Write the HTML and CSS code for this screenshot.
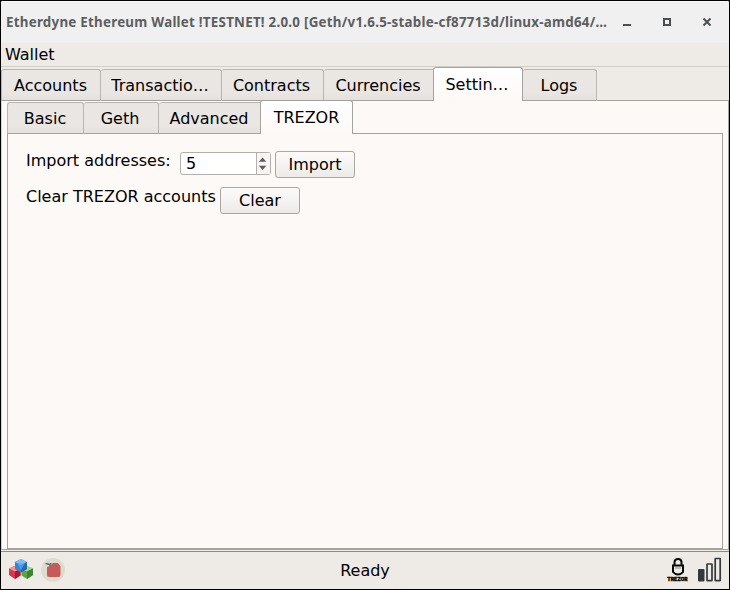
FILE: index.html
```html
<!DOCTYPE html>
<html lang="en">
<head>
<meta charset="utf-8">
<title>Etherdyne Ethereum Wallet</title>
<link rel="stylesheet" href="styles.css">
</head>
<body>
<div class="window">
  <header class="titlebar">
    <span class="title">Etherdyne Ethereum Wallet !TESTNET! 2.0.0 [Geth/v1.6.5-stable-cf87713d/linux-amd64/…</span>
    <svg class="controls" width="100" height="20" viewBox="0 0 100 20">
      <path d="M3 12h8v2H3z" fill="#4c5052"/>
      <path d="M44 7h6v6h-6z" fill="none" stroke="#4c5052" stroke-width="2"/>
      <path d="M83.500 6.500l7 7M90.500 6.500l-7 7" stroke="#4c5052" stroke-width="2"/>
    </svg>
  </header>
  <nav class="menubar"><span>Wallet</span></nav>
  <div class="tabs main-tabs">
    <div class="tab accounts">Accounts</div>
    <div class="tab transactions">Transactio…</div>
    <div class="tab contracts">Contracts</div>
    <div class="tab currencies">Currencies</div>
    <div class="tab active settings">Settin…</div>
    <div class="tab logs">Logs</div>
  </div>
  <main class="pane">
    <div class="tabs sub-tabs">
      <div class="tab basic">Basic</div>
      <div class="tab geth">Geth</div>
      <div class="tab advanced">Advanced</div>
      <div class="tab active trezor">TREZOR</div>
    </div>
    <section class="subpane">
      <div class="row">
        <span class="label import-label">Import addresses:</span>
        <div class="spin">
          <span class="value">5</span>
          <svg class="arrows" width="14" height="21" viewBox="0 0 14 21">
            <path d="M2 8.500L6 4l4 4.500zM2 13h8l-4 4.500z" fill="#5c5c5c"/>
          </svg>
        </div>
        <button class="button import">Import</button>
      </div>
      <div class="row">
        <span class="label clear-label">Clear TREZOR accounts</span>
        <button class="button">Clear</button>
      </div>
    </section>
  </main>
  <footer class="statusbar">
    <div class="status-left">
      <svg width="26" height="22" viewBox="0 0 26 22">
        <path d="M1 9.500l5.500-2.500 6 3v6.500L7 20l-6-4z" fill="#d03a4c"/>
        <path d="M1 9.500l5.500-2.500 6 3L7 12.500z" fill="#f0939c"/>
        <path d="M7 12.500V20l5.500-3.500V10z" fill="#b01830"/>
        <path d="M13.500 10l5.500-3 6 2.500V16l-6 4-5.500-3.500z" fill="#5aa544"/>
        <path d="M13.500 10l5.500-3 6 2.500-6 3z" fill="#a6d48c"/>
        <path d="M19 12.500V20l6-4V9.500z" fill="#3d8530"/>
        <path d="M7 3l6-3 6 3v7l-6 3.500L7 10z" fill="#3685d3"/>
        <path d="M7 3l6-3 6 3-6 3z" fill="#82bdf0"/>
        <path d="M13 6v7.500l6-3.500V3z" fill="#2768b6"/>
        <path d="M9 4h8l-4 7z" fill="#61a7ea" opacity=".7"/>
      </svg>
      <svg width="24" height="24" viewBox="0 0 24 24">
        <circle cx="12" cy="12" r="12" fill="#ddddce"/>
        <path d="M6 9l3-1 3-3h5l2.500 3.500V17q0 2-2 2H8q-2 0-2-2z" fill="#c95a5a"/>
        <path d="M4.500 5.500l4 1 1 2M8.500 6.500l2-1" fill="none" stroke="#5b7078" stroke-width="1.500"/>
      </svg>
    </div>
    <span class="status-text">Ready</span>
    <div class="status-right">
      <div class="device">
        <svg width="14" height="18" viewBox="0 0 14 18">
          <path d="M3.500 7V4.500q0-3.500 3.500-3.500t3.500 3.500V7M2 7.500h10v6.500q-2 2.500-5 2.500t-5-2.500z" fill="none" stroke="#080808" stroke-width="2"/>
          <path d="M4 10h6" stroke="#888" stroke-width="1"/>
        </svg>
        <span class="device-name">TREZOR</span>
      </div>
      <svg width="24" height="26" viewBox="0 0 24 26">
        <rect x="0" y="12" width="6.500" height="12.500" rx="1" fill="#34383a"/>
        <rect x="9" y="7" width="5" height="16.700" rx=".5" fill="none" stroke="#34383a" stroke-width="1.700"/>
        <rect x="17.200" y="1.500" width="5" height="22.200" rx=".5" fill="none" stroke="#34383a" stroke-width="1.700"/>
      </svg>
    </div>
  </footer>
</div>
</body>
</html>
```

FILE: styles.css
```css
* { box-sizing: border-box; }
body {
  margin: 0;
  background: #000;
  font: 16px/20px "DejaVu Sans", sans-serif;
  color: #000;
}
.window {
  width: 730px;
  height: 590px;
  border: 1px solid #000;
  border-radius: 3px 3px 0 0;
  background: #eeebe7;
  display: flex;
  flex-direction: column;
  overflow: hidden;
}
.titlebar {
  height: 42px;
  flex: none;
  background: #f0f0f0;
  border-top: 1px solid #faf9fb;
  display: flex;
  align-items: center;
  padding: 0 0 1px 5px;
}
.title {
  width: 614px;
  font: bold 13.33px/20px "Noto Sans", sans-serif;
  letter-spacing: .26px;
  color: #5c5e60;
  white-space: nowrap;
}
.controls { flex: none; }
.menubar {
  height: 24px;
  flex: none;
  border-bottom: 1px solid #d2cfca;
  padding: 2px 0 0 4px;
}
.tabs { display: flex; align-items: flex-end; }
.main-tabs { height: 34px; flex: none; }
.tab {
  height: 32px;
  flex: none;
  border: 1px solid #b8b5b2;
  border-left-width: 0;
  border-bottom-color: #a5a3a0;
  border-radius: 3px 3px 0 0;
  background: linear-gradient(#e9e6e3 75%, #e3e0dd);
  line-height: 31px;
  text-align: center;
  white-space: nowrap;
}
.tab:first-child { border-left-width: 1px; }
.tab.active {
  height: 34px;
  border: 1px solid #a5a3a0;
  border-bottom: 0;
  background: linear-gradient(#fff, #fdf9f6);
  line-height: 33px;
}
.accounts { width: 100px; padding-right: 1px; }
.transactions { width: 121px; padding-right: 2px; }
.contracts { width: 102px; padding-right: 2px; }
.currencies { width: 109px; border-right: 0; border-top-right-radius: 0; padding-right: 1px; }
.tab.settings { width: 90px; padding-right: 2px; }
.logs { width: 74px; padding-right: 1px; }
.pane {
  height: 449px;
  flex: none;
  border-right: 1px solid #a5a3a0;
  border-left: 1px solid #d6d1ce;
  border-bottom: 1px solid #a5a3a0;
  background: #fdf9f6;
  padding: 0 5px;
}
.tabs::after {
  content: "";
  flex: 1;
  border-bottom: 1px solid #a5a3a0;
}
.sub-tabs { height: 33px; }
.basic { width: 77px; padding-right: 1px; }
.geth { width: 75px; padding-right: 2px; }
.advanced { width: 101px; border-right: 0; border-top-right-radius: 0; padding-right: 1px; }
.trezor { width: 93px; }
.subpane {
  height: 415px;
  border: 1px solid #a5a3a0;
  border-top: 0;
  padding: 17px 0 0 18px;
}
.row { display: flex; height: 36px; }
.label { line-height: 20px; white-space: nowrap; }
.import-label { width: 154px; }
.clear-label { width: 194px; }
.spin {
  width: 91px;
  height: 23px;
  margin-top: 1px;
  border: 1px solid #b2afac;
  border-radius: 3px;
  background: #fff;
  display: flex;
}
.value { flex: 1; padding-left: 5px; line-height: 21px; }
.arrows { border-left: 1px solid #b2afac; background: #f7f5f3; }
.button {
  width: 80px;
  height: 27px;
  padding: 0;
  border: 1px solid #aaa8a5;
  border-radius: 3px;
  background: linear-gradient(#fcfbfa, #edebe8);
  color: #000;
  font: 16px/23px "DejaVu Sans", sans-serif;
}
.import { margin-left: 4px; }
.statusbar {
  flex: 1;
  margin-top: 1px;
  border-top: 1px solid #8e8b87;
  display: grid;
  grid-template-columns: 1fr auto 1fr;
  align-items: center;
  padding: 0 7px 1px;
}
.status-left { display: flex; align-items: center; gap: 7px; }
.status-text { line-height: 20px; padding-top: 2px; }
.status-right { display: flex; justify-content: flex-end; align-items: center; gap: 10px; }
.device { width: 21px; display: flex; flex-direction: column; align-items: center; }
.device-name { font: 900 5px/6px Inter, sans-serif; color: #000; -webkit-text-stroke: .3px #000; }
```
